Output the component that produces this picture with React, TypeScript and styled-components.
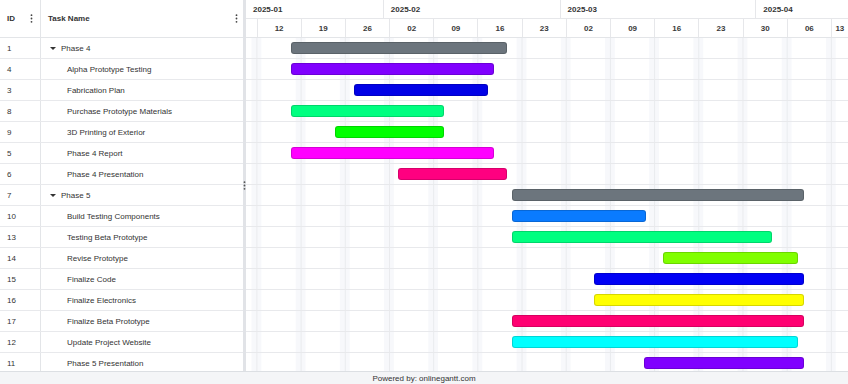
import styled, { createGlobalStyle } from "styled-components";

const GlobalStyle = createGlobalStyle`
  html, body {
    margin: 0;
    padding: 0;
    background: #fff;
  }
  body {
    font-family: "Liberation Sans", Arial, sans-serif;
    color: #333;
  }
`;

// timeline scale: one week column is 44.2px, Jan 12 sits 10.5px into the pane
const WEEK = 44.2;
const DAY = WEEK / 7;
const ORIGIN = 10.5;
const PANE_WIDTH = 848 - 246;
const ROW_H = 21;

const BASE = Date.UTC(2025, 0, 12);
const dayOf = (iso: string) => {
   const [y, m, d] = iso.split("-").map(Number);
   return Math.round((Date.UTC(y, m - 1, d) - BASE) / 86400000);
};
const xOf = (iso: string) => ORIGIN + dayOf(iso) * DAY;

interface Task {
   id: number
   name: string
   parent?: boolean
   start: string
   end: string
   color: string
}

const tasks: Task[] = [
   { id: 1, name: "Phase 4", parent: true, start: "2025-01-17", end: "2025-02-21", color: "#6c757d" },
   { id: 4, name: "Alpha Prototype Testing", start: "2025-01-17", end: "2025-02-19", color: "#8000ff" },
   { id: 3, name: "Fabrication Plan", start: "2025-01-27", end: "2025-02-18", color: "#0000e6" },
   { id: 8, name: "Purchase Prototype Materials", start: "2025-01-17", end: "2025-02-11", color: "#00ff80" },
   { id: 9, name: "3D Printing of Exterior", start: "2025-01-24", end: "2025-02-11", color: "#00ff00" },
   { id: 5, name: "Phase 4 Report", start: "2025-01-17", end: "2025-02-19", color: "#ff00ff" },
   { id: 6, name: "Phase 4 Presentation", start: "2025-02-03", end: "2025-02-21", color: "#ff0080" },
   { id: 7, name: "Phase 5", parent: true, start: "2025-02-21", end: "2025-04-09", color: "#6c757d" },
   { id: 10, name: "Build Testing Components", start: "2025-02-21", end: "2025-03-15", color: "#0a7bff" },
   { id: 13, name: "Testing Beta Prototype", start: "2025-02-21", end: "2025-04-04", color: "#00ff80" },
   { id: 14, name: "Revise Prototype", start: "2025-03-17", end: "2025-04-08", color: "#80ff00" },
   { id: 15, name: "Finalize Code", start: "2025-03-06", end: "2025-04-09", color: "#0000f5" },
   { id: 16, name: "Finalize Electronics", start: "2025-03-06", end: "2025-04-09", color: "#ffff00" },
   { id: 17, name: "Finalize Beta Prototype", start: "2025-02-21", end: "2025-04-09", color: "#ff0072" },
   { id: 12, name: "Update Project Website", start: "2025-02-21", end: "2025-04-08", color: "#00ffff" },
   { id: 11, name: "Phase 5 Presentation", start: "2025-03-14", end: "2025-04-09", color: "#8000ff" },
];

const months = ["2025-01-01", "2025-02-01", "2025-03-01", "2025-04-01", "2025-05-01"];
const monthCells = months.slice(0, -1).map((m, i) => {
   const left = Math.max(0, xOf(m));
   const right = Math.min(PANE_WIDTH, xOf(months[i + 1]));
   return { label: m.slice(0, 7), width: right - left };
});

// week columns, the last one clipped at the pane edge so its label stays visible
const weekCells = Array.from({ length: 14 }, (_, i) => {
   const d = new Date(BASE + i * 7 * 86400000);
   const left = ORIGIN + i * WEEK;
   return {
      label: String(d.getUTCDate()).padStart(2, "0"),
      width: Math.min(WEEK, PANE_WIDTH - left),
   };
});

const Frame = styled.div`
   width: 848px;
   height: 384px;
   display: flex;
   flex-direction: column;
   overflow: hidden;
`;

const Main = styled.div`
   display: flex;
   height: 371px;
   overflow: hidden;
`;

const GridPane = styled.div`
   width: 243px;
   flex: none;
   display: flex;
   flex-direction: column;
`;

const GridHeader = styled.div`
   display: grid;
   grid-template-columns: 41px 1fr;
   height: 38px;
   flex: none;
   box-sizing: border-box;
   border-bottom: 1px solid #e3e5e8;
`;

const HeaderCell = styled.div<{ $first?: boolean }>`
   display: flex;
   align-items: center;
   justify-content: space-between;
   padding: 0 ${(p) => (p.$first ? 7 : 5)}px 0 7px;
   font-size: 8px;
   font-weight: bold;
   color: #333;
   border-right: ${(p) => (p.$first ? "1px solid #e3e5e8" : "none")};
`;

const GridRow = styled.div`
   display: grid;
   grid-template-columns: 41px 1fr;
   height: ${ROW_H}px;
   flex: none;
   box-sizing: border-box;
   border-bottom: 1px solid #e8e9ec;
   font-size: 8px;
   color: #333;
`;

const IdCell = styled.div`
   display: flex;
   align-items: center;
   padding-left: 7px;
   border-right: 1px solid #e3e5e8;
`;

const NameCell = styled.div<{ $parent?: boolean }>`
   display: flex;
   align-items: center;
   gap: 5px;
   padding-left: ${(p) => (p.$parent ? 9 : 26)}px;
   white-space: nowrap;
`;

const Caret = styled.span`
   width: 0;
   height: 0;
   border-left: 3px solid transparent;
   border-right: 3px solid transparent;
   border-top: 3.5px solid #333;
`;

const Splitter = styled.div`
   width: 3px;
   flex: none;
   background: #e1e3e7;
   display: flex;
   align-items: center;
   justify-content: center;
   box-sizing: border-box;
`;

const TimelinePane = styled.div`
   flex: 1;
   overflow: hidden;
   display: flex;
   flex-direction: column;
`;

const TimeHeader = styled.div`
   height: 38px;
   flex: none;
   box-sizing: border-box;
   border-bottom: 1px solid #e3e5e8;
   display: flex;
   flex-direction: column;
`;

const MonthRow = styled.div`
   display: flex;
   height: 19px;
   box-sizing: border-box;
   border-bottom: 1px solid #e6e7ea;
`;

const MonthCell = styled.div<{ $first?: boolean }>`
   flex: none;
   box-sizing: border-box;
   display: flex;
   align-items: center;
   padding-left: 7px;
   border-left: ${(p) => (p.$first ? "none" : "1px solid #e6e7ea")};
   font-size: 8px;
   font-weight: bold;
   color: #333;
   white-space: nowrap;
   overflow: hidden;
`;

const WeekRow = styled.div`
   display: flex;
   flex: 1;
`;

const WeekCell = styled.div<{ $first?: boolean }>`
   flex: none;
   box-sizing: border-box;
   display: flex;
   align-items: center;
   justify-content: center;
   border-left: ${(p) => (p.$first ? "none" : "1px solid #e6e7ea")};
   font-size: 8px;
   font-weight: bold;
   color: #3a3a3a;
`;

const TimeBody = styled.div`
   flex: 1;
   display: flex;
   flex-direction: column;
   background-image:
      linear-gradient(to right, transparent 5px, #e9ebee 5px, #e9ebee 6px, transparent 6px),
      linear-gradient(to right, #f7f8fb 0, #f7f8fb 10px, transparent 10px);
   background-size: ${WEEK}px 100%;
   background-position: ${ORIGIN - 5}px 0;
`;

const TimeRow = styled.div`
   height: ${ROW_H}px;
   flex: none;
   box-sizing: border-box;
   border-bottom: 1px solid #e8e9ec;
   display: flex;
   align-items: center;
`;

const Bar = styled.div<{ $color: string }>`
   height: 12px;
   flex: none;
   box-sizing: border-box;
   border-radius: 3px;
   background: ${(p) => p.$color};
   border: 1px solid rgba(0, 0, 0, 0.16);
`;

const Footer = styled.div`
   flex: 1;
   display: flex;
   justify-content: center;
   padding-top: 2px;
   box-sizing: border-box;
   background: #f4f5f7;
   border-top: 1px solid #dcdfe3;
   font-size: 8px;
   color: #333;
`;

const Dots = ({ color = "#444" }: { color?: string }) => (
   <svg width="3" height="9" viewBox="0 0 3 9">
      <circle cx="1.5" cy="1.2" r="0.9" fill={color} />
      <circle cx="1.5" cy="4.5" r="0.9" fill={color} />
      <circle cx="1.5" cy="7.8" r="0.9" fill={color} />
   </svg>
);

const App = () => {
   return (
      <Frame>
         <GlobalStyle />
         <Main>
            <GridPane>
               <GridHeader>
                  <HeaderCell $first>ID<Dots /></HeaderCell>
                  <HeaderCell>Task Name<Dots /></HeaderCell>
               </GridHeader>
               {tasks.map((task) =>
                  <GridRow key={task.id}>
                     <IdCell>{task.id}</IdCell>
                     <NameCell $parent={task.parent}>
                        {task.parent && <Caret />}
                        {task.name}
                     </NameCell>
                  </GridRow>
               )}
            </GridPane>

            <Splitter>
               <Dots color="#555" />
            </Splitter>

            <TimelinePane>
               <TimeHeader>
                  <MonthRow>
                     {monthCells.map((m, i) =>
                        <MonthCell key={m.label} $first={i === 0} style={{ width: m.width }}>
                           {m.label}
                        </MonthCell>
                     )}
                  </MonthRow>
                  <WeekRow>
                     <WeekCell $first style={{ width: ORIGIN }} />
                     {weekCells.map((w, i) =>
                        <WeekCell key={i} style={{ width: w.width }}>{w.label}</WeekCell>
                     )}
                  </WeekRow>
               </TimeHeader>
               <TimeBody>
                  {tasks.map((task) => {
                     const left = xOf(task.start) + 2.5;
                     const width = xOf(task.end) - 2 - left;
                     return (
                        <TimeRow key={task.id}>
                           <Bar $color={task.color} style={{ marginLeft: left, width }} />
                        </TimeRow>
                     );
                  })}
               </TimeBody>
            </TimelinePane>
         </Main>
         <Footer>Powered by: onlinegantt.com</Footer>
      </Frame>
   );
};

export default App;
